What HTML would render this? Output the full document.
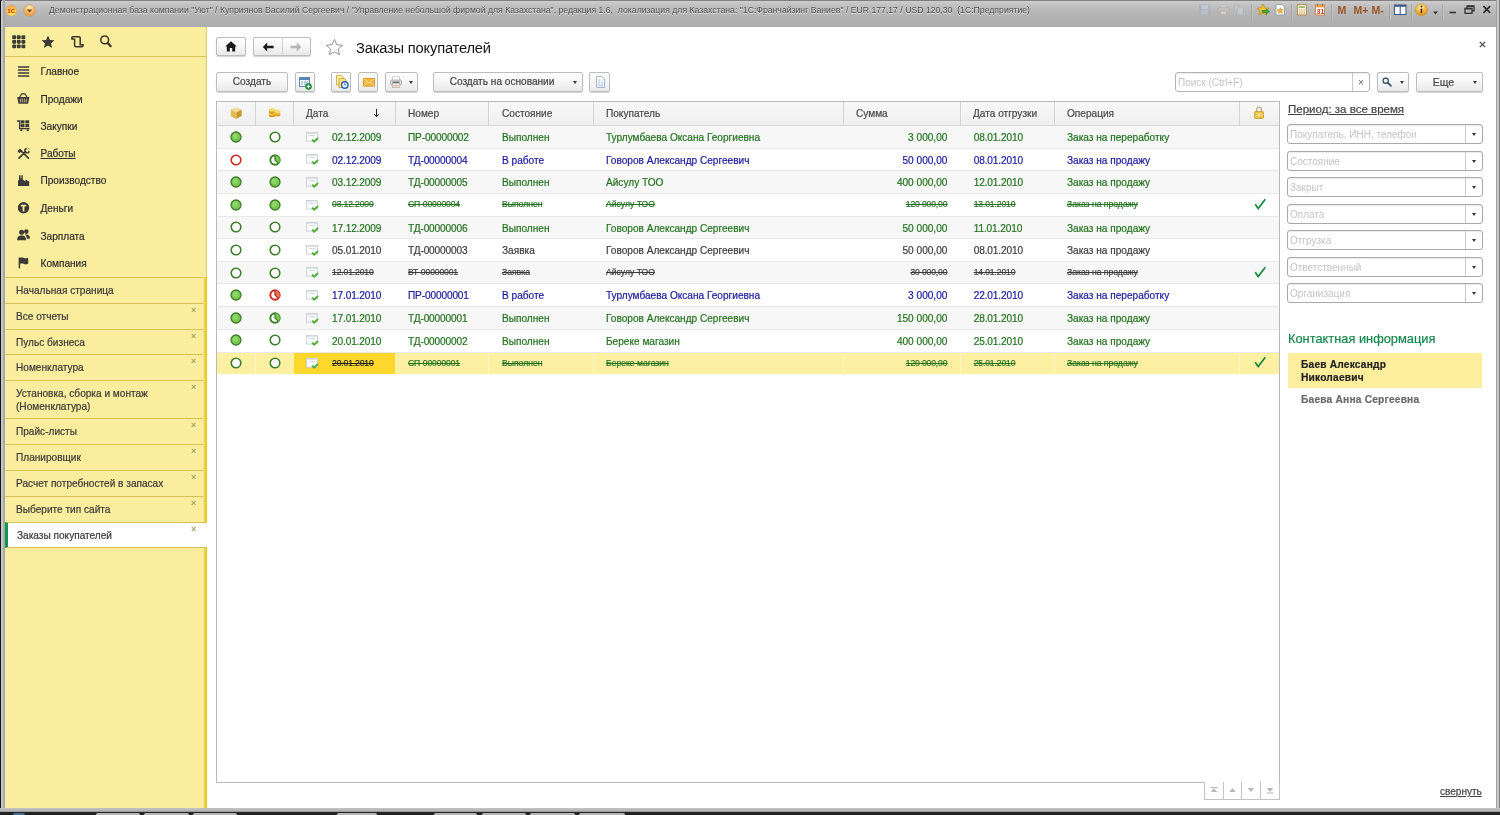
<!DOCTYPE html>
<html lang="ru">
<head>
<meta charset="utf-8">
<title>Заказы покупателей</title>
<style>
*{box-sizing:border-box;margin:0;padding:0}
html,body{width:1500px;height:815px;overflow:hidden;background:#fff}
body{font-family:"Liberation Sans",sans-serif;font-size:10.1px;color:#333;position:relative;-webkit-text-stroke:.2px}
.abs{position:absolute}
body>*{will-change:transform}
#titlebar{position:absolute;left:0;top:0;width:1500px;height:27px;background:linear-gradient(#808080 0,#808080 1px,#cdcdcd 1px,#c2c2c2 5px,#b7b7b7 12px,#adadad 26px)}
#titlebar .t{position:absolute;left:49px;top:4.6px;font-size:8.68px;color:#505050;-webkit-text-stroke:0;white-space:nowrap;text-shadow:0 1px 0 #e4e4e4;letter-spacing:0}
#lb{position:absolute;left:0;top:0;width:5px;height:812px;background:linear-gradient(90deg,#151515 0,#151515 .6px,#6c6c6c .6px,#6c6c6c 1.300px,#c6c8c8 1.300px,#c6c8c8 2.900px,#a9a7ae 2.900px,#a9a7ae 4.600px,transparent 4.600px)}
#rb{position:absolute;left:1495px;top:0;width:5px;height:812px;background:linear-gradient(90deg,transparent 0,transparent .8px,#a0a0a0 .8px,#a0a0a0 2.300px,#c8c8c8 2.300px,#c8c8c8 3.600px,#808080 3.600px,#808080 100%)}
#bb{position:absolute;left:0;top:808px;width:1500px;height:7px;background:linear-gradient(#c4c4c4 0,#b0b0b0 3px,#8c8c8c 4px,#242424 4.500px,#1e1e1e 100%)}
#bb i{position:absolute;top:5.300px;height:2px;background:#b4b4b4;border-radius:1.500px 1.500px 0 0}
#side{position:absolute;left:5px;top:27px;width:202px;height:781px;background:#fbed9e;border-right:1px solid #dccb6e}
#sbar{position:absolute;left:198px;top:250px;width:4px;height:531px;background:linear-gradient(90deg,#fbed9e,#ecd23c 45%,#e3c21c)}
#side .tb{position:absolute;left:0;top:0;width:201px;height:30px;border-bottom:1px solid #d9c65a}
.sec{position:absolute;left:35.500px;line-height:12px;margin-top:1.1px;font-size:10.1px;color:#2e2e2e;white-space:nowrap}
.sic{position:absolute;left:12px}
.tab{position:absolute;left:0;width:198px;border-top:1px solid #d6c256;font-size:10.1px;color:#3a3a3a;padding:6px 0 0 11px;line-height:13px}
.tab .x{position:absolute;left:186px;top:.4px;font-size:9px;color:#a39a62}
.tab.act .x{left:183px}
.tab.act{width:202px;z-index:2;background:#fff;border-left:3px solid #0a9a4a;padding-left:9px;border-bottom:1px solid #d6c256}
#main{position:absolute;left:207px;top:27px;width:1289px;height:781px;background:#fff}
.btn{position:absolute;height:20px;border:1px solid #bdbdbd;border-radius:2px;background:linear-gradient(#fff,#f6f6f6 50%,#e9e9e9);box-shadow:0 1px 1px rgba(0,0,0,.18);font-size:10.1px;color:#444;text-align:center;line-height:18px;white-space:nowrap}
.caret{position:absolute;width:0;height:0;border-left:2.5px solid transparent;border-right:2.5px solid transparent;border-top:3px solid #333}
.inp{position:absolute;height:20px;border:1px solid #a9a9a9;border-radius:3px;background:#fff;font-size:10.1px;color:#c4c4c4;line-height:19px;padding-left:2px;font-size:10px;-webkit-text-stroke:0;white-space:nowrap;box-shadow:inset 0 1px 1px rgba(0,0,0,.08)}
.inp .dd{position:absolute;right:0;top:0;width:17px;height:18px;border-left:1px solid #c9c9c9}
.inp .dd .caret{left:6px;top:8px}
#tbl{position:absolute;left:216px;top:101px;width:1064px;height:682px;border:1px solid #b9b9b9;background:#fff;overflow:hidden}
#thead{position:absolute;left:0;top:0;width:1062px;height:24px;background:linear-gradient(#f8f8f8,#efefef);border-bottom:1px solid #d6d6d6}
#thead span{position:absolute;top:6px;font-size:10.1px;color:#4a4a4a;white-space:nowrap}
#thead i{position:absolute;top:0;width:1px;height:23px;background:#d4d4d4}
.row{position:absolute;left:0;width:1062px;height:23px;border-bottom:1px solid #e9e9e9;background:#fff}
.row.alt{background:#f7f7f7}
.row.sel{background:#fdf0a2;border-bottom:none}
.cur{position:absolute;left:77px;top:0;width:101px;height:21px;background:#fdd72c}
.row.sel i{position:absolute;top:0;width:1px;height:21px;background:#fef7cc}
.c{position:absolute;top:5px;white-space:nowrap;font-size:10.1px;line-height:12px}
.c.n{letter-spacing:-.13px}
.c.r{left:auto;text-align:right}
.cg{color:#23721f}.cb{color:#1a1a9c}.ck{color:#3c3c3c}
.st{font-size:8.6px;text-decoration:line-through;letter-spacing:0}
.st.n,.st.r{letter-spacing:-.14px}
.ck2{color:#222}
.ic{position:absolute}
</style>
</head>
<body>
<div id="titlebar">
  <svg class="abs" style="left:5.300px;top:1.800px" width="40" height="18" viewBox="0 0 40 18">
    <defs><linearGradient id="yg" x1="0" y1="0" x2="0" y2="1"><stop offset="0" stop-color="#f6a04a"/><stop offset=".5" stop-color="#fbd24a"/><stop offset="1" stop-color="#fdf05a"/></linearGradient>
    <radialGradient id="og" cx="50%" cy="25%" r="75%"><stop offset="0" stop-color="#ffedc4"/><stop offset=".6" stop-color="#f6b45a"/><stop offset="1" stop-color="#e8943a"/></radialGradient></defs>
    <circle cx="6.500" cy="8.500" r="5.400" fill="url(#yg)" stroke="#e0a050" stroke-width=".6"/>
    <text x="2.300" y="10.600" font-family="Liberation Sans,sans-serif" font-size="6.200" font-weight="bold" fill="#d8201c" style="-webkit-text-stroke:.3px #d8201c">1С</text>
    <circle cx="24.500" cy="8.500" r="5.700" fill="url(#og)" stroke="#d49a5a" stroke-width=".7"/>
    <path d="M21.600 7.400h5.800l-2.900 3.200z" fill="#7a4a1c"/>
  </svg>
  <div class="t">Демонстрационная база компании "Уют" / Куприянов Василий Сергеевич / "Управление небольшой фирмой для Казахстана", редакция 1.6,&nbsp; локализация для Казахстана: "1С:Франчайзинг Ваниев" / EUR 177,17 / USD 120,30&nbsp; (1С:Предприятие)</div>
  
<svg class="abs" style="left:1190px;top:0" width="306" height="26" viewBox="0 0 306 26">
 <defs><radialGradient id="ig" cx="45%" cy="30%" r="75%"><stop offset="0" stop-color="#fff2c0"/><stop offset=".55" stop-color="#f4b43a"/><stop offset="1" stop-color="#d88a1a"/></radialGradient></defs>
 <g opacity=".6"><rect x="9.500" y="4.500" width="10.500" height="10.500" rx="1" fill="#a8b4c6" stroke="#9aa6b8" stroke-width=".6"/><rect x="11.500" y="5" width="6.500" height="4" fill="#c8d0dc"/><rect x="11.500" y="10.500" width="6.500" height="4" fill="#bcc6d4"/></g>
 <g opacity=".55"><rect x="30.500" y="4.500" width="6" height="4" fill="#d8d8d8" stroke="#a8a8a8" stroke-width=".6"/><rect x="28" y="7.500" width="11" height="5" rx="1" fill="#c8c4bc" stroke="#a09c94" stroke-width=".6"/><rect x="30.500" y="11" width="6" height="3.500" fill="#e0e0e0" stroke="#a8a8a8" stroke-width=".6"/></g>
 <g opacity=".55"><path d="M44.500 5h5v8h-5z" fill="#c4c8cc" stroke="#a0a4a8" stroke-width=".6"/><path d="M47.500 7h4.500l1.500 1.500v6.500h-6z" fill="#d0d4d8" stroke="#a0a4a8" stroke-width=".6"/></g>
 <path d="M61.500 4v15M101.500 4v15M141.500 4v15M199.500 4v15M221.500 4v15M252.500 4v15" stroke="#a2a2a2" stroke-width=".8"/><path d="M62.500 4v15M102.500 4v15M142.500 4v15M200.500 4v15M222.500 4v15M253.500 4v15" stroke="#c6c6c6" stroke-width=".8"/>
 <path d="M73 4l1.800 3.800 4.200.4-3.200 2.800 1 4.200L73 13l-3.800 2.200 1-4.200L67 8.200l4.200-.4z" fill="#f2c43a" stroke="#b8881a" stroke-width=".7"/><path d="M72 10.500h4v-1.800l3.500 2.800-3.500 2.800v-1.800h-4z" fill="#3ca83c" stroke="#1c7a24" stroke-width=".5"/>
 <path d="M86 4.500h6l2.500 2.500v8h-8.500z" fill="#fbfbfb" stroke="#8a98a8" stroke-width=".8"/><path d="M90.200 7.500l1 2.100 2.300.2-1.700 1.500.5 2.300-2.100-1.200-2.100 1.200.5-2.300-1.700-1.500 2.300-.2z" fill="#f0b830" stroke="#b88418" stroke-width=".4"/>
 <rect x="107.500" y="4.500" width="9" height="10.500" fill="#fcf6e4" stroke="#b4843c" stroke-width=".9"/><rect x="109" y="6" width="6" height="2" fill="#9ac07a"/><path d="M109 10h6M109 12h6M109 13.800h6" stroke="#c89a5a" stroke-width="1" stroke-dasharray="1.400 .9"/>
 <rect x="125.500" y="5" width="9" height="10" fill="#fffdf6" stroke="#c8843c" stroke-width=".9"/><rect x="125.500" y="5" width="9" height="2.400" fill="#e8a04a"/><path d="M127.500 3.800v2.400M132.500 3.800v2.400" stroke="#b86a2a" stroke-width="1"/><text x="126.800" y="13.600" font-family="Liberation Sans,sans-serif" font-size="6.500" font-weight="bold" fill="#d0341c">31</text>
 <text x="147.500" y="14" font-family="Liberation Sans,sans-serif" font-size="10.500" font-weight="bold" fill="#9c5426">M</text>
 <text x="163.500" y="14" font-family="Liberation Sans,sans-serif" font-size="10.500" font-weight="bold" fill="#9c5426">M+</text>
 <text x="181.500" y="14" font-family="Liberation Sans,sans-serif" font-size="10.500" font-weight="bold" fill="#9c5426">M-</text>
 <rect x="204.500" y="5" width="11.500" height="9.500" fill="#fdfdfd" stroke="#3c5c8c" stroke-width="1.100"/><rect x="204.500" y="5" width="11.500" height="1.800" fill="#3c5c8c"/><path d="M210.200 6v8.500" stroke="#3c5c8c" stroke-width="1.100"/>
 <circle cx="231.400" cy="9.800" r="6" fill="url(#ig)" stroke="#c88a2a" stroke-width=".6"/><path d="M231.400 8.600v4.600" stroke="#4a3414" stroke-width="1.700"/><circle cx="231.400" cy="6.400" r="1" fill="#4a3414"/>
 <path d="M243 11.600h5l-2.500 2.800z" fill="#3a3a3a"/>
 <path d="M259.500 12.500h6.500" stroke="#333" stroke-width="1.600"/>
 <path d="M277 8v-2.200h7v5h-2" fill="none" stroke="#333" stroke-width="1.300"/><rect x="275" y="8.300" width="7" height="5" fill="none" stroke="#333" stroke-width="1.300"/><path d="M275 9h7M277 6.300h7" stroke="#333" stroke-width="1.200"/>
 <path d="M293.500 6.200l6.600 6.600M300.100 6.200l-6.600 6.600" stroke="#2c2c2c" stroke-width="1.800"/>
</svg>
</div>
<div id="side">
  <div id="sbar"></div><div class="tb">
<svg class="abs" style="left:7.300px;top:8.100px" width="14" height="14" viewBox="0 0 14 14" fill="#3a3a36"><rect x="0.2" y="0.2" width="3.900" height="3.900" rx="1.200"/><rect x="4.8" y="0.2" width="3.900" height="3.900" rx="1.200"/><rect x="9.4" y="0.2" width="3.900" height="3.900" rx="1.200"/><rect x="0.2" y="4.8" width="3.900" height="3.900" rx="1.200"/><rect x="4.8" y="4.8" width="3.900" height="3.900" rx="1.200"/><rect x="9.4" y="4.8" width="3.900" height="3.900" rx="1.200"/><rect x="0.2" y="9.4" width="3.900" height="3.900" rx="1.200"/><rect x="4.8" y="9.4" width="3.900" height="3.900" rx="1.200"/><rect x="9.4" y="9.4" width="3.900" height="3.900" rx="1.200"/></svg>
<svg class="abs" style="left:36.300px;top:8.300px" width="14" height="14" viewBox="0 0 14 14"><path d="M7 0.600l1.900 4.300 4.600.4-3.500 3.100 1.100 4.600L7 10.500 2.900 13l1.100-4.600L.5 5.300l4.600-.4z" fill="#3a3a36"/></svg>
<svg class="abs" style="left:65px;top:8px" width="14" height="14" viewBox="0 0 14 14" fill="none" stroke="#3a3426" stroke-width="1.500"><path d="M4.600 3.900H1.900V2.800a1 1 0 0 1 1-1H9.200a1 1 0 0 1 1 1V9.700H13v0.900a1.200 1.200 0 0 1-1.200 1.200H6.200a1.600 1.600 0 0 1-1.600-1.600V3.900"/></svg>
<svg class="abs" style="left:94px;top:8px" width="14" height="14" viewBox="0 0 14 14" fill="none" stroke="#3a3426"><circle cx="5.700" cy="4.900" r="3.900" stroke-width="1.500"/><path d="M8.700 8l3 3.200" stroke-width="2.200" stroke-linecap="round"/></svg>
</div>
  <svg class="sic" style="top:37.5px" width="13" height="13" viewBox="0 0 13 13"><path d="M1 2h11.200M1 5h11.200M1 8h11.200M1 11h11.200" stroke="#3b3a36" stroke-width="1.500" fill="none"/></svg><div class="sec" style="top:38.3px"><span>Главное</span></div>
<svg class="sic" style="top:64.5px" width="13" height="13" viewBox="0 0 13 13"><path d="M0.200 5h12.200l-1.300 6.700H1.500z" fill="#3b3a36"/><path d="M2.600 5.200L4.600 1.800h3.400L10 5.200" fill="none" stroke="#3b3a36" stroke-width="1.200"/><path d="M3.300 6.600v3.800M5.300 6.600v3.800M7.300 6.600v3.800M9.300 6.600v3.800" stroke="#fbed9e" stroke-width=".7"/></svg><div class="sec" style="top:65.5px"><span>Продажи</span></div>
<svg class="sic" style="top:92.1px" width="13" height="13" viewBox="0 0 13 13"><path d="M0 2h2.600v7.600h9.900" fill="none" stroke="#3b3a36" stroke-width="1.300"/><rect x="3.600" y="1.300" width="3.900" height="3.100" fill="#3b3a36"/><rect x="8.300" y="1.300" width="3.900" height="3.100" fill="#3b3a36"/><rect x="3.600" y="5.100" width="3.900" height="3.100" fill="#3b3a36"/><rect x="8.300" y="5.100" width="3.900" height="3.100" fill="#3b3a36"/><rect x="3.400" y="10.200" width="2" height="1.900" fill="#3b3a36"/><rect x="9.800" y="10.200" width="2" height="1.900" fill="#3b3a36"/></svg><div class="sec" style="top:92.8px"><span>Закупки</span></div>
<svg class="sic" style="top:119.9px" width="13" height="13" viewBox="0 0 13 13"><path d="M2 11.200L8.600 4.600M11.400 11.200L4.600 4.400" stroke="#3b3a36" stroke-width="1.700" fill="none" stroke-linecap="round"/><path d="M0.400 4.200L3 1.500l2.200 2.200-2.600 2.600z" fill="#3b3a36"/><circle cx="10" cy="3.700" r="2.200" fill="none" stroke="#3b3a36" stroke-width="1.400"/><path d="M10 1l2.800 2.800" stroke="#fbed9e" stroke-width="1.700"/></svg><div class="sec" style="top:120.1px"><span style="text-decoration:underline">Работы</span></div>
<svg class="sic" style="top:146.5px" width="13" height="13" viewBox="0 0 13 13"><path d="M1 12V6.400l1-.3V1.300h1.500v3h.8v-3h1.500v4.200L8.600 7.500V5.500L12.200 7.500V12z" fill="#3b3a36"/></svg><div class="sec" style="top:147.4px"><span>Производство</span></div>
<svg class="sic" style="top:173.8px" width="13" height="13" viewBox="0 0 13 13"><circle cx="6.500" cy="6.700" r="5.700" fill="#3b3a36"/><path d="M3.800 4.600h5.400M6.500 4.600v5.800" stroke="#fbed9e" stroke-width="1.800" fill="none"/></svg><div class="sec" style="top:175.2px"><span>Деньги</span></div>
<svg class="sic" style="top:201.3px" width="13" height="13" viewBox="0 0 13 13"><circle cx="4.600" cy="4.200" r="2.500" fill="#3b3a36"/><circle cx="9.300" cy="3.600" r="2.300" fill="#3b3a36"/><path d="M0.100 12.200c0-3.400 1.800-4.600 4.500-4.600s4.500 1.200 4.500 4.600z" fill="#3b3a36"/><path d="M8 6.600c3.400-.8 5 1 5 4.200H9.900c-.2-2-.8-3.300-1.900-4.200z" fill="#3b3a36"/></svg><div class="sec" style="top:202.6px"><span>Зарплата</span></div>
<svg class="sic" style="top:228.7px" width="13" height="13" viewBox="0 0 13 13"><path d="M2.400 1.500V12.300" stroke="#3b3a36" stroke-width="1.500"/><path d="M2.800 2c1.600-.8 3-.6 4.200-.1s2.600.5 4.200-.2v6c-1.600.7-3 .7-4.200.2s-2.600-.7-4.200.1z" fill="#3b3a36"/></svg><div class="sec" style="top:229.7px"><span>Компания</span></div>
<div class="tab" style="top:250px;height:26px">Начальная страница</div>
<div class="tab" style="top:276px;height:26px">Все отчеты<span class="x">×</span></div>
<div class="tab" style="top:302px;height:25px">Пульс бизнеса<span class="x">×</span></div>
<div class="tab" style="top:327px;height:26px">Номенклатура<span class="x">×</span></div>
<div class="tab" style="top:353px;height:38px">Установка, сборка и монтаж<br>(Номенклатура)<span class="x">×</span></div>
<div class="tab" style="top:391px;height:26px">Прайс-листы<span class="x">×</span></div>
<div class="tab" style="top:417px;height:26px">Планировщик<span class="x">×</span></div>
<div class="tab" style="top:443px;height:26px">Расчет потребностей в запасах<span class="x">×</span></div>
<div class="tab" style="top:469px;height:26px">Выберите тип сайта<span class="x">×</span></div>
<div class="tab act" style="top:495px;height:26px">Заказы покупателей<span class="x">×</span></div>

</div>
<div id="main"></div>

<!-- header row -->
<div class="btn" style="left:216px;top:37px;width:30px;height:19px"><svg class="abs" style="left:8px;top:3px" width="12" height="11" viewBox="0 0 12 11"><path d="M6 0.3L0.2 5.6h1.6V10.6h3V7h2.4v3.6h3V5.600h1.6z" fill="#1a1a1a"/></svg></div>
<div class="btn" style="left:253px;top:37px;width:58px;height:19px"><svg class="abs" style="left:8px;top:4px" width="12" height="10" viewBox="0 0 12 10"><path d="M5.2 0.6L0.8 5l4.4 4.400V6.200H11.600V3.800H5.2z" fill="#1a1a1a"/></svg><svg class="abs" style="left:36px;top:4px" width="12" height="10" viewBox="0 0 12 10"><path d="M6.800 0.6L11.200 5l-4.400 4.400V6.200H0.4V3.800H6.800z" fill="#b5b5b5"/></svg><div class="abs" style="left:28px;top:0;width:1px;height:17px;background:#d0d0d0"></div></div>
<svg class="abs" style="left:324.7px;top:37.6px" width="18.8" height="17.9" viewBox="0 0 20 19"><path d="M10 1.500l2.500 5.600 6.100.6-4.600 4.100 1.400 6L10 14.600 4.600 17.800l1.400-6L1.400 7.700l6.100-.6z" fill="#fff" stroke="#8a8a8a" stroke-width="1"/></svg>
<div class="abs" style="left:355.500px;top:39.500px;font-size:14.700px;letter-spacing:-.19px;-webkit-text-stroke:0;color:#141414;white-space:nowrap;line-height:17px">Заказы покупателей</div>
<svg class="abs" style="left:1479px;top:41px" width="7" height="7" viewBox="0 0 7 7"><path d="M0.800 0.800l5.400 5.400M6.200 0.800L0.800 6.200" stroke="#444" stroke-width="1.200"/></svg>
<!-- command bar -->
<div class="btn" style="left:216px;top:72px;width:72px">Создать</div>
<div class="btn" style="left:295px;top:72px;width:20px"><svg class="abs" style="left:3px;top:4px" width="13" height="13" viewBox="0 0 13 13"><rect x="0.5" y="0.5" width="10" height="9" fill="#fff" stroke="#5b84b8"/><rect x="1" y="1" width="9" height="2" fill="#5b84b8"/><path d="M2 5h2M5 5h4M2 7h2M5 7h4" stroke="#6aa0d0" stroke-width="1"/><circle cx="9.500" cy="9.500" r="3" fill="#1e9a3a" stroke="#0d6a22" stroke-width=".6"/><path d="M9.500 7.800v3.400M7.800 9.500h3.400" stroke="#fff" stroke-width="1.100"/></svg></div>
<div class="btn" style="left:331px;top:72px;width:20px"><svg class="abs" style="left:3px;top:2px" width="14" height="14" viewBox="0 0 14 14"><path d="M1.500 0.500h5l2 2v7.500h-7z" fill="#fdf0b8" stroke="#d8b24a"/><path d="M4 3.500h5.500l1.500 1.500v7.500H4z" fill="#fbe28a" stroke="#d8a830"/><circle cx="9.800" cy="10" r="3.200" fill="#fff" stroke="#2a62b0" stroke-width="1.400"/><path d="M9.800 8.200V10h1.500" stroke="#2a62b0" stroke-width=".9" fill="none"/></svg></div>
<div class="btn" style="left:358px;top:72px;width:20px"><svg class="abs" style="left:4px;top:5px" width="12" height="9" viewBox="0 0 12 9"><rect x="0.500" y="0.500" width="11" height="7.600" fill="#f4b63c" stroke="#dc9a24"/><path d="M0.800 1l5.200 3.800L11.200 1M0.800 7.800l3.800-3.200M11.200 7.800L7.400 4.600" fill="none" stroke="#fce4a4" stroke-width=".9"/></svg></div>
<div class="btn" style="left:385px;top:72px;width:33px"><svg class="abs" style="left:4px;top:3px" width="12" height="13" viewBox="0 0 12 13"><rect x="2.500" y="0.800" width="7" height="4" fill="#fff" stroke="#c4c4c4" stroke-width=".8"/><rect x="0.500" y="4" width="11" height="5" rx="1.200" fill="#dcdcdc" stroke="#a4a4a4" stroke-width=".8"/><rect x="2.500" y="7.300" width="7" height="4.200" fill="#fff" stroke="#b0b0b0" stroke-width=".8"/><path d="M3.500 9.800h5" stroke="#e8744a" stroke-width=".9"/><rect x="2.500" y="5.600" width="7" height="1.300" fill="#666"/></svg><i class="caret" style="left:23px;top:8px"></i></div>
<div class="btn" style="left:433px;top:72px;width:150px;padding-right:12px">Создать на основании<i class="caret" style="left:139px;top:8px"></i></div>
<div class="btn" style="left:589px;top:72px;width:21px"><svg class="abs" style="left:6px;top:3px" width="9" height="12" viewBox="0 0 9 12"><path d="M0.500 0.500h5.500l2.500 2.500v8.500h-8z" fill="#fbfdff" stroke="#9ab0cc" stroke-width=".9"/><path d="M2 4h2.500M2 6h2M5 6h2M2 8h2M5 8h2M2 9.800h5" stroke="#8ab0d8" stroke-width=".8"/></svg></div>
<!-- search -->
<div class="inp" style="left:1175px;top:72px;width:195px;border-color:#b4b4b4">Поиск (Ctrl+F)<span class="abs" style="right:0;top:0;width:17px;height:18px;border-left:1px solid #c9c9c9;color:#666;text-align:center;font-size:10px;padding:0">×</span></div>
<div class="btn" style="left:1377px;top:72px;width:32px"><svg class="abs" style="left:4px;top:4px" width="12" height="12" viewBox="0 0 12 12" fill="none" stroke="#28465e"><circle cx="3.700" cy="3.700" r="2.600" stroke-width="1.150"/><path d="M5.700 5.700l3.300 3.200" stroke-width="1.500" stroke-linecap="round"/></svg><i class="caret" style="left:22px;top:8px"></i></div>
<div class="btn" style="left:1416px;top:72px;width:67px;padding-right:12px;font-size:10.500px">Еще<i class="caret" style="left:56px;top:8px"></i></div>

<div id="tbl">
  <div id="thead">
    <span style="left:89px">Дата</span><svg class="abs" style="left:156px;top:7px" width="7" height="9" viewBox="0 0 7 9"><path d="M3.500 0v7.500M1.300 5.200l2.200 2.600 2.200-2.600" fill="none" stroke="#222" stroke-width="1"/></svg><span style="left:191px">Номер</span><span style="left:285px">Состояние</span><span style="left:389px">Покупатель</span><span style="left:639px">Сумма</span><span style="left:756px">Дата отгрузки</span><span style="left:850px">Операция</span>
    <i style="left:38px"></i><i style="left:76px"></i><i style="left:178px"></i><i style="left:271px"></i><i style="left:376px"></i><i style="left:626px"></i><i style="left:743px"></i><i style="left:837px"></i><i style="left:1022px"></i>
    <svg class="abs" style="left:13px;top:4.500px" width="12.400" height="12.400" viewBox="0 0 13 13"><path d="M6.500 0.800L12 3v6.500L6.500 12.200 1 9.500V3z" fill="#d8a634"/><path d="M6.500 0.800L12 3 6.500 5.400 1 3z" fill="#f2dc98"/><path d="M6.500 5.400V12.200L1 9.500V3z" fill="#e2b848"/><path d="M6.500 5.400L12 3v6.500L6.500 12.200z" fill="#c8962a"/><path d="M1 3l5.500 2.400L12 3M6.500 5.400v6.800" fill="none" stroke="#f6e6b0" stroke-width=".5"/></svg>
<svg class="abs" style="left:51.300px;top:4px" width="13" height="13" viewBox="0 0 13 13"><ellipse cx="4.200" cy="9.500" rx="3.400" ry="1.800" fill="#d89c24"/><ellipse cx="4.200" cy="7.700" rx="3.400" ry="1.800" fill="#f0c040"/><ellipse cx="4.200" cy="5.700" rx="3.400" ry="1.800" fill="#d89c24"/><ellipse cx="4.200" cy="3.800" rx="3.400" ry="1.800" fill="#f8dc74"/><ellipse cx="9.400" cy="8.700" rx="3" ry="1.700" fill="#d89c24"/><ellipse cx="9.400" cy="7" rx="3" ry="1.700" fill="#f0c040"/><ellipse cx="9.400" cy="5.200" rx="3" ry="1.700" fill="#f8dc74"/></svg>
<svg class="abs" style="left:1037px;top:4.300px" width="10" height="13" viewBox="0 0 10 13"><path d="M2.600 6V3.600a2.400 2.400 0 0 1 4.800 0V6" fill="#f4f4ec" stroke="#b4ac8c" stroke-width="1.300"/><rect x="0.600" y="5.500" width="8.800" height="7" rx=".8" fill="#e8c044" stroke="#c49c2c" stroke-width=".8"/><path d="M1.600 7.600h6.800M1.600 9.600h6.800" stroke="#f4dc80" stroke-width=".9"/><rect x="4.300" y="7.600" width="1.400" height="3" fill="#f8e8a0"/></svg>
  </div>
<div class="row alt" style="top:24px;height:23px">
<svg class="ic" style="left:12.3px;top:4.0px" width="14" height="14" viewBox="0 0 14 14"><circle cx="7" cy="7" r="5" fill="#78c850" stroke="#3d7d2c" stroke-width="1.3"/><circle cx="6.4" cy="6.2" r="2.6" fill="#a4e07e" opacity=".55"/></svg>
<svg class="ic" style="left:50.7px;top:4.0px" width="14" height="14" viewBox="0 0 14 14"><circle cx="7" cy="7" r="4.8" fill="#fff" stroke="#3d7d2c" stroke-width="1.6"/></svg>
<svg class="ic" style="left:89px;top:5.8px" width="14" height="12" viewBox="0 0 14 12"><rect x="0.5" y="0.5" width="11" height="8.6" fill="#fbfcfd" stroke="#cad0d8" stroke-width=".9"/><path d="M1 1.5h10" stroke="#dfe4ea" stroke-width="1"/><path d="M3 3.500h6" stroke="#d4dae2" stroke-width="1"/><path d="M6.100 7.600l2 2.100L12 6" fill="none" stroke="#52ac36" stroke-width="1.900"/></svg>
<span class="c n cg" style="left:115px;top:6.2px">02.12.2009</span>
<span class="c n cg" style="left:191px;top:6.2px">ПР-00000002</span>
<span class="c cg" style="left:285px;top:6.2px">Выполнен</span>
<span class="c cg" style="left:389px;top:6.2px">Турлумбаева Оксана Георгиевна</span>
<span class="c r cg" style="right:331.6px;top:6.2px">3 000,00</span>
<span class="c n cg" style="left:756.7px;top:6.2px">08.01.2010</span>
<span class="c cg" style="left:850px;top:6.2px">Заказ на переработку</span>
</div>
<div class="row" style="top:47px;height:22px">
<svg class="ic" style="left:12.3px;top:3.5999999999999996px" width="14" height="14" viewBox="0 0 14 14"><circle cx="7" cy="7" r="4.8" fill="#fff" stroke="#c8281e" stroke-width="1.6"/></svg>
<svg class="ic" style="left:50.7px;top:3.5999999999999996px" width="14" height="14" viewBox="0 0 14 14"><circle cx="7" cy="7" r="4.700" fill="#fff" stroke="#3d7d2c" stroke-width="1.900"/><path d="M7 7 L7 2.200 A4.800 4.800 0 0 1 10.400 10.400 Z" fill="#78c850"/><path d="M7 2.200V7L10.400 10.400" fill="none" stroke="#3d7d2c" stroke-width="1.300"/></svg>
<svg class="ic" style="left:89px;top:5.4px" width="14" height="12" viewBox="0 0 14 12"><rect x="0.5" y="0.5" width="11" height="8.6" fill="#fbfcfd" stroke="#cad0d8" stroke-width=".9"/><path d="M1 1.5h10" stroke="#dfe4ea" stroke-width="1"/><path d="M3 3.500h6" stroke="#d4dae2" stroke-width="1"/><path d="M6.100 7.600l2 2.100L12 6" fill="none" stroke="#52ac36" stroke-width="1.900"/></svg>
<span class="c n cb" style="left:115px;top:5.8px">02.12.2009</span>
<span class="c n cb" style="left:191px;top:5.8px">ТД-00000004</span>
<span class="c cb" style="left:285px;top:5.8px">В работе</span>
<span class="c cb" style="left:389px;top:5.8px">Говоров Александр Сергеевич</span>
<span class="c r cb" style="right:331.6px;top:5.8px">50 000,00</span>
<span class="c n cb" style="left:756.7px;top:5.8px">08.01.2010</span>
<span class="c cb" style="left:850px;top:5.8px">Заказ на продажу</span>
</div>
<div class="row alt" style="top:69px;height:23px">
<svg class="ic" style="left:12.3px;top:4.199999999999999px" width="14" height="14" viewBox="0 0 14 14"><circle cx="7" cy="7" r="5" fill="#78c850" stroke="#3d7d2c" stroke-width="1.3"/><circle cx="6.4" cy="6.2" r="2.6" fill="#a4e07e" opacity=".55"/></svg>
<svg class="ic" style="left:50.7px;top:4.199999999999999px" width="14" height="14" viewBox="0 0 14 14"><circle cx="7" cy="7" r="5" fill="#78c850" stroke="#3d7d2c" stroke-width="1.3"/><circle cx="6.4" cy="6.2" r="2.6" fill="#a4e07e" opacity=".55"/></svg>
<svg class="ic" style="left:89px;top:6.0px" width="14" height="12" viewBox="0 0 14 12"><rect x="0.5" y="0.5" width="11" height="8.6" fill="#fbfcfd" stroke="#cad0d8" stroke-width=".9"/><path d="M1 1.5h10" stroke="#dfe4ea" stroke-width="1"/><path d="M3 3.500h6" stroke="#d4dae2" stroke-width="1"/><path d="M6.100 7.600l2 2.100L12 6" fill="none" stroke="#52ac36" stroke-width="1.900"/></svg>
<span class="c n cg" style="left:115px;top:6.4px">03.12.2009</span>
<span class="c n cg" style="left:191px;top:6.4px">ТД-00000005</span>
<span class="c cg" style="left:285px;top:6.4px">Выполнен</span>
<span class="c cg" style="left:389px;top:6.4px">Айсулу ТОО</span>
<span class="c r cg" style="right:331.6px;top:6.4px">400 000,00</span>
<span class="c n cg" style="left:756.7px;top:6.4px">12.01.2010</span>
<span class="c cg" style="left:850px;top:6.4px">Заказ на продажу</span>
</div>
<div class="row" style="top:92px;height:23px">
<svg class="ic" style="left:12.3px;top:3.8000000000000007px" width="14" height="14" viewBox="0 0 14 14"><circle cx="7" cy="7" r="5" fill="#78c850" stroke="#3d7d2c" stroke-width="1.3"/><circle cx="6.4" cy="6.2" r="2.6" fill="#a4e07e" opacity=".55"/></svg>
<svg class="ic" style="left:50.7px;top:3.8000000000000007px" width="14" height="14" viewBox="0 0 14 14"><circle cx="7" cy="7" r="5" fill="#78c850" stroke="#3d7d2c" stroke-width="1.3"/><circle cx="6.4" cy="6.2" r="2.6" fill="#a4e07e" opacity=".55"/></svg>
<svg class="ic" style="left:89px;top:5.6px" width="14" height="12" viewBox="0 0 14 12"><rect x="0.5" y="0.5" width="11" height="8.6" fill="#fbfcfd" stroke="#cad0d8" stroke-width=".9"/><path d="M1 1.5h10" stroke="#dfe4ea" stroke-width="1"/><path d="M3 3.500h6" stroke="#d4dae2" stroke-width="1"/><path d="M6.100 7.600l2 2.100L12 6" fill="none" stroke="#52ac36" stroke-width="1.900"/></svg>
<span class="c n cg st" style="left:115px;top:4.4px">03.12.2009</span>
<span class="c n cg st" style="left:191px;top:4.4px">СП-00000004</span>
<span class="c cg st" style="left:285px;top:4.4px">Выполнен</span>
<span class="c cg st" style="left:389px;top:4.4px">Айсулу ТОО</span>
<span class="c r cg st" style="right:331.6px;top:4.4px">120 000,00</span>
<span class="c n cg st" style="left:756.7px;top:4.4px">13.01.2010</span>
<span class="c cg st" style="left:850px;top:4.4px">Заказ на продажу</span>
<svg class="ic" style="left:1037px;top:4.0px" width="13" height="12" viewBox="0 0 13 12"><path d="M1.200 6.300l3 4.200L11.300 1.200" fill="none" stroke="#148a3c" stroke-width="1.700"/></svg>
</div>
<div class="row alt" style="top:115px;height:22px">
<svg class="ic" style="left:12.3px;top:3.4000000000000004px" width="14" height="14" viewBox="0 0 14 14"><circle cx="7" cy="7" r="4.8" fill="#fff" stroke="#3d7d2c" stroke-width="1.6"/></svg>
<svg class="ic" style="left:50.7px;top:3.4000000000000004px" width="14" height="14" viewBox="0 0 14 14"><circle cx="7" cy="7" r="4.8" fill="#fff" stroke="#3d7d2c" stroke-width="1.6"/></svg>
<svg class="ic" style="left:89px;top:5.2px" width="14" height="12" viewBox="0 0 14 12"><rect x="0.5" y="0.5" width="11" height="8.6" fill="#fbfcfd" stroke="#cad0d8" stroke-width=".9"/><path d="M1 1.5h10" stroke="#dfe4ea" stroke-width="1"/><path d="M3 3.500h6" stroke="#d4dae2" stroke-width="1"/><path d="M6.100 7.600l2 2.100L12 6" fill="none" stroke="#52ac36" stroke-width="1.900"/></svg>
<span class="c n cg" style="left:115px;top:5.6px">17.12.2009</span>
<span class="c n cg" style="left:191px;top:5.6px">ТД-00000006</span>
<span class="c cg" style="left:285px;top:5.6px">Выполнен</span>
<span class="c cg" style="left:389px;top:5.6px">Говоров Александр Сергеевич</span>
<span class="c r cg" style="right:331.6px;top:5.6px">50 000,00</span>
<span class="c n cg" style="left:756.7px;top:5.6px">11.01.2010</span>
<span class="c cg" style="left:850px;top:5.6px">Заказ на продажу</span>
</div>
<div class="row" style="top:137px;height:23px">
<svg class="ic" style="left:12.3px;top:4.0px" width="14" height="14" viewBox="0 0 14 14"><circle cx="7" cy="7" r="4.8" fill="#fff" stroke="#3d7d2c" stroke-width="1.6"/></svg>
<svg class="ic" style="left:50.7px;top:4.0px" width="14" height="14" viewBox="0 0 14 14"><circle cx="7" cy="7" r="4.8" fill="#fff" stroke="#3d7d2c" stroke-width="1.6"/></svg>
<svg class="ic" style="left:89px;top:5.8px" width="14" height="12" viewBox="0 0 14 12"><rect x="0.5" y="0.5" width="11" height="8.6" fill="#fbfcfd" stroke="#cad0d8" stroke-width=".9"/><path d="M1 1.5h10" stroke="#dfe4ea" stroke-width="1"/><path d="M3 3.500h6" stroke="#d4dae2" stroke-width="1"/><path d="M6.100 7.600l2 2.100L12 6" fill="none" stroke="#52ac36" stroke-width="1.900"/></svg>
<span class="c n ck" style="left:115px;top:6.2px">05.01.2010</span>
<span class="c n ck" style="left:191px;top:6.2px">ТД-00000003</span>
<span class="c ck" style="left:285px;top:6.2px">Заявка</span>
<span class="c ck" style="left:389px;top:6.2px">Говоров Александр Сергеевич</span>
<span class="c r ck" style="right:331.6px;top:6.2px">50 000,00</span>
<span class="c n ck" style="left:756.7px;top:6.2px">08.01.2010</span>
<span class="c ck" style="left:850px;top:6.2px">Заказ на продажу</span>
</div>
<div class="row alt" style="top:160px;height:22px">
<svg class="ic" style="left:12.3px;top:3.5999999999999996px" width="14" height="14" viewBox="0 0 14 14"><circle cx="7" cy="7" r="4.8" fill="#fff" stroke="#3d7d2c" stroke-width="1.6"/></svg>
<svg class="ic" style="left:50.7px;top:3.5999999999999996px" width="14" height="14" viewBox="0 0 14 14"><circle cx="7" cy="7" r="4.8" fill="#fff" stroke="#3d7d2c" stroke-width="1.6"/></svg>
<svg class="ic" style="left:89px;top:5.4px" width="14" height="12" viewBox="0 0 14 12"><rect x="0.5" y="0.5" width="11" height="8.6" fill="#fbfcfd" stroke="#cad0d8" stroke-width=".9"/><path d="M1 1.5h10" stroke="#dfe4ea" stroke-width="1"/><path d="M3 3.500h6" stroke="#d4dae2" stroke-width="1"/><path d="M6.100 7.600l2 2.100L12 6" fill="none" stroke="#52ac36" stroke-width="1.900"/></svg>
<span class="c n ck st" style="left:115px;top:4.2px">12.01.2010</span>
<span class="c n ck st" style="left:191px;top:4.2px">ВТ-00000001</span>
<span class="c ck st" style="left:285px;top:4.2px">Заявка</span>
<span class="c ck st" style="left:389px;top:4.2px">Айсулу ТОО</span>
<span class="c r ck st" style="right:331.6px;top:4.2px">30 000,00</span>
<span class="c n ck st" style="left:756.7px;top:4.2px">14.01.2010</span>
<span class="c ck st" style="left:850px;top:4.2px">Заказ на продажу</span>
<svg class="ic" style="left:1037px;top:3.8px" width="13" height="12" viewBox="0 0 13 12"><path d="M1.200 6.300l3 4.200L11.300 1.200" fill="none" stroke="#148a3c" stroke-width="1.700"/></svg>
</div>
<div class="row" style="top:182px;height:23px">
<svg class="ic" style="left:12.3px;top:4.199999999999999px" width="14" height="14" viewBox="0 0 14 14"><circle cx="7" cy="7" r="5" fill="#78c850" stroke="#3d7d2c" stroke-width="1.3"/><circle cx="6.4" cy="6.2" r="2.6" fill="#a4e07e" opacity=".55"/></svg>
<svg class="ic" style="left:50.7px;top:4.199999999999999px" width="14" height="14" viewBox="0 0 14 14"><circle cx="7" cy="7" r="4.700" fill="#fff" stroke="#c8281e" stroke-width="1.900"/><path d="M7 7 L7 2.200 A4.800 4.800 0 0 1 10.400 10.400 Z" fill="#ee7054"/><path d="M7 2.200V7L10.400 10.400" fill="none" stroke="#c8281e" stroke-width="1.300"/></svg>
<svg class="ic" style="left:89px;top:6.0px" width="14" height="12" viewBox="0 0 14 12"><rect x="0.5" y="0.5" width="11" height="8.6" fill="#fbfcfd" stroke="#cad0d8" stroke-width=".9"/><path d="M1 1.5h10" stroke="#dfe4ea" stroke-width="1"/><path d="M3 3.500h6" stroke="#d4dae2" stroke-width="1"/><path d="M6.100 7.600l2 2.100L12 6" fill="none" stroke="#52ac36" stroke-width="1.900"/></svg>
<span class="c n cb" style="left:115px;top:6.4px">17.01.2010</span>
<span class="c n cb" style="left:191px;top:6.4px">ПР-00000001</span>
<span class="c cb" style="left:285px;top:6.4px">В работе</span>
<span class="c cb" style="left:389px;top:6.4px">Турлумбаева Оксана Георгиевна</span>
<span class="c r cb" style="right:331.6px;top:6.4px">3 000,00</span>
<span class="c n cb" style="left:756.7px;top:6.4px">22.01.2010</span>
<span class="c cb" style="left:850px;top:6.4px">Заказ на переработку</span>
</div>
<div class="row alt" style="top:205px;height:23px">
<svg class="ic" style="left:12.3px;top:3.8000000000000007px" width="14" height="14" viewBox="0 0 14 14"><circle cx="7" cy="7" r="5" fill="#78c850" stroke="#3d7d2c" stroke-width="1.3"/><circle cx="6.4" cy="6.2" r="2.6" fill="#a4e07e" opacity=".55"/></svg>
<svg class="ic" style="left:50.7px;top:3.8000000000000007px" width="14" height="14" viewBox="0 0 14 14"><circle cx="7" cy="7" r="4.700" fill="#fff" stroke="#3d7d2c" stroke-width="1.900"/><path d="M7 7 L7 2.200 A4.800 4.800 0 0 1 10.400 10.400 Z" fill="#78c850"/><path d="M7 2.200V7L10.400 10.400" fill="none" stroke="#3d7d2c" stroke-width="1.300"/></svg>
<svg class="ic" style="left:89px;top:5.6px" width="14" height="12" viewBox="0 0 14 12"><rect x="0.5" y="0.5" width="11" height="8.6" fill="#fbfcfd" stroke="#cad0d8" stroke-width=".9"/><path d="M1 1.5h10" stroke="#dfe4ea" stroke-width="1"/><path d="M3 3.500h6" stroke="#d4dae2" stroke-width="1"/><path d="M6.100 7.600l2 2.100L12 6" fill="none" stroke="#52ac36" stroke-width="1.900"/></svg>
<span class="c n cg" style="left:115px;top:6.0px">17.01.2010</span>
<span class="c n cg" style="left:191px;top:6.0px">ТД-00000001</span>
<span class="c cg" style="left:285px;top:6.0px">Выполнен</span>
<span class="c cg" style="left:389px;top:6.0px">Говоров Александр Сергеевич</span>
<span class="c r cg" style="right:331.6px;top:6.0px">150 000,00</span>
<span class="c n cg" style="left:756.7px;top:6.0px">28.01.2010</span>
<span class="c cg" style="left:850px;top:6.0px">Заказ на продажу</span>
</div>
<div class="row" style="top:228px;height:23px">
<svg class="ic" style="left:12.3px;top:3.4000000000000004px" width="14" height="14" viewBox="0 0 14 14"><circle cx="7" cy="7" r="5" fill="#78c850" stroke="#3d7d2c" stroke-width="1.3"/><circle cx="6.4" cy="6.2" r="2.6" fill="#a4e07e" opacity=".55"/></svg>
<svg class="ic" style="left:50.7px;top:3.4000000000000004px" width="14" height="14" viewBox="0 0 14 14"><circle cx="7" cy="7" r="4.8" fill="#fff" stroke="#3d7d2c" stroke-width="1.6"/></svg>
<svg class="ic" style="left:89px;top:5.2px" width="14" height="12" viewBox="0 0 14 12"><rect x="0.5" y="0.5" width="11" height="8.6" fill="#fbfcfd" stroke="#cad0d8" stroke-width=".9"/><path d="M1 1.5h10" stroke="#dfe4ea" stroke-width="1"/><path d="M3 3.500h6" stroke="#d4dae2" stroke-width="1"/><path d="M6.100 7.600l2 2.100L12 6" fill="none" stroke="#52ac36" stroke-width="1.900"/></svg>
<span class="c n cg" style="left:115px;top:5.6px">20.01.2010</span>
<span class="c n cg" style="left:191px;top:5.6px">ТД-00000002</span>
<span class="c cg" style="left:285px;top:5.6px">Выполнен</span>
<span class="c cg" style="left:389px;top:5.6px">Береке магазин</span>
<span class="c r cg" style="right:331.6px;top:5.6px">400 000,00</span>
<span class="c n cg" style="left:756.7px;top:5.6px">25.01.2010</span>
<span class="c cg" style="left:850px;top:5.6px">Заказ на продажу</span>
</div>
<div class="row alt sel" style="top:251px;height:21px">
<svg class="ic" style="left:12.3px;top:3.0px" width="14" height="14" viewBox="0 0 14 14"><circle cx="7" cy="7" r="4.8" fill="#fff" stroke="#3d7d2c" stroke-width="1.6"/></svg>
<svg class="ic" style="left:50.7px;top:3.0px" width="14" height="14" viewBox="0 0 14 14"><circle cx="7" cy="7" r="4.8" fill="#fff" stroke="#3d7d2c" stroke-width="1.6"/></svg>
<div class="cur" style="height:21px"></div>
<i style="left:38px"></i><i style="left:271px"></i><i style="left:376px"></i><i style="left:626px"></i><i style="left:743px"></i><i style="left:837px"></i><i style="left:1022px"></i>
<svg class="ic" style="left:89px;top:4.8px" width="14" height="12" viewBox="0 0 14 12"><rect x="0.5" y="0.5" width="11" height="8.6" fill="#fbfcfd" stroke="#cad0d8" stroke-width=".9"/><path d="M1 1.5h10" stroke="#dfe4ea" stroke-width="1"/><path d="M3 3.500h6" stroke="#d4dae2" stroke-width="1"/><path d="M6.100 7.600l2 2.100L12 6" fill="none" stroke="#52ac36" stroke-width="1.900"/></svg>
<span class="c n cg st ck2" style="left:115px;top:3.6px">20.01.2010</span>
<span class="c n cg st" style="left:191px;top:3.6px">СП-00000001</span>
<span class="c cg st" style="left:285px;top:3.6px">Выполнен</span>
<span class="c cg st" style="left:389px;top:3.6px">Береке магазин</span>
<span class="c r cg st" style="right:331.6px;top:3.6px">120 000,00</span>
<span class="c n cg st" style="left:756.7px;top:3.6px">25.01.2010</span>
<span class="c cg st" style="left:850px;top:3.6px">Заказ на продажу</span>
<svg class="ic" style="left:1037px;top:3.2px" width="13" height="12" viewBox="0 0 13 12"><path d="M1.200 6.300l3 4.200L11.300 1.200" fill="none" stroke="#148a3c" stroke-width="1.700"/></svg>
</div>
</div>

<div class="abs" style="left:1204px;top:782px;width:76px;height:17.500px;border:1px solid #c4c4c4;border-top:none;background:#fff">
<i class="abs" style="left:17.500px;top:0;width:1px;height:17px;background:#c4c4c4"></i><i class="abs" style="left:36.300px;top:0;width:1px;height:17px;background:#c4c4c4"></i><i class="abs" style="left:55px;top:0;width:1px;height:17px;background:#c4c4c4"></i>
<svg class="abs" style="left:0;top:0" width="75" height="17" viewBox="0 0 75 17" fill="#b8b8b8"><path d="M5.500 5h7v1h-7zM9 6l3.300 4H5.700z"/><path d="M27.500 6l3.300 4H24.200z"/><path d="M46 10l3.300-4H42.700z"/><path d="M61.500 10.500h7v1h-7zM65 10l3.300-4H61.700z"/></svg>
</div>

<div class="abs" style="left:1288px;top:102px;font-size:11.520px;color:#444;text-decoration:underline;white-space:nowrap;line-height:14px">Период: за все время</div>
<div class="inp" style="left:1287px;top:124px;width:196px">Покупатель, ИНН, телефон<span class="dd"><i class="caret"></i></span></div>
<div class="inp" style="left:1287px;top:151px;width:196px">Состояние<span class="dd"><i class="caret"></i></span></div>
<div class="inp" style="left:1287px;top:177px;width:196px">Закрыт<span class="dd"><i class="caret"></i></span></div>
<div class="inp" style="left:1287px;top:204px;width:196px">Оплата<span class="dd"><i class="caret"></i></span></div>
<div class="inp" style="left:1287px;top:230px;width:196px">Отгрузка<span class="dd"><i class="caret"></i></span></div>
<div class="inp" style="left:1287px;top:257px;width:196px">Ответственный<span class="dd"><i class="caret"></i></span></div>
<div class="inp" style="left:1287px;top:283px;width:196px">Организация<span class="dd"><i class="caret"></i></span></div>
<div class="abs" style="left:1287.600px;top:331px;font-size:12.840px;color:#12874b;white-space:nowrap;line-height:16px">Контактная информация</div>
<div class="abs" style="left:1288px;top:353px;width:194px;height:35px;background:#fcee9c"></div>
<div class="abs" style="left:1300.600px;top:359.200px;font-size:10.200px;font-weight:bold;color:#222;line-height:12.500px;letter-spacing:.2px">Баев Александр<br>Николаевич</div>
<div class="abs" style="left:1300.600px;top:394.400px;font-size:10.200px;font-weight:bold;color:#6a6a6a;line-height:12.500px;letter-spacing:.2px;white-space:nowrap">Баева Анна Сергеевна</div>
<div class="abs" style="left:1440px;top:786px;font-size:10.060px;color:#444;text-decoration:underline;line-height:12px">свернуть</div>

<div class="abs" style="left:4px;top:27px;width:1px;height:781px;background:#fbed9e"></div><div id="lb"></div><svg class="abs" style="left:0;top:0" width="4" height="4" viewBox="0 0 4 4"><path d="M0 0h4A4 4 0 0 0 0 4z" fill="#1c1c1c"/></svg><svg class="abs" style="left:1496px;top:0" width="4" height="4" viewBox="0 0 4 4"><path d="M4 0H0A4 4 0 0 1 4 4z" fill="#6a6a6a"/></svg><div id="rb"></div><div id="bb"><i style="left:95.7px;width:44.0px"></i><i style="left:144px;width:44.6px"></i><i style="left:192.5px;width:44.5px"></i><i style="left:337px;width:40px"></i><i style="left:434px;width:43px"></i><i style="left:481.5px;width:44.5px"></i><i style="left:530px;width:45px"></i><i style="left:578.5px;width:46.5px"></i><i style="left:13px;width:12px;background:#4a6a9a;border-radius:5px 5px 0 0"></i></div>
</body>
</html>
